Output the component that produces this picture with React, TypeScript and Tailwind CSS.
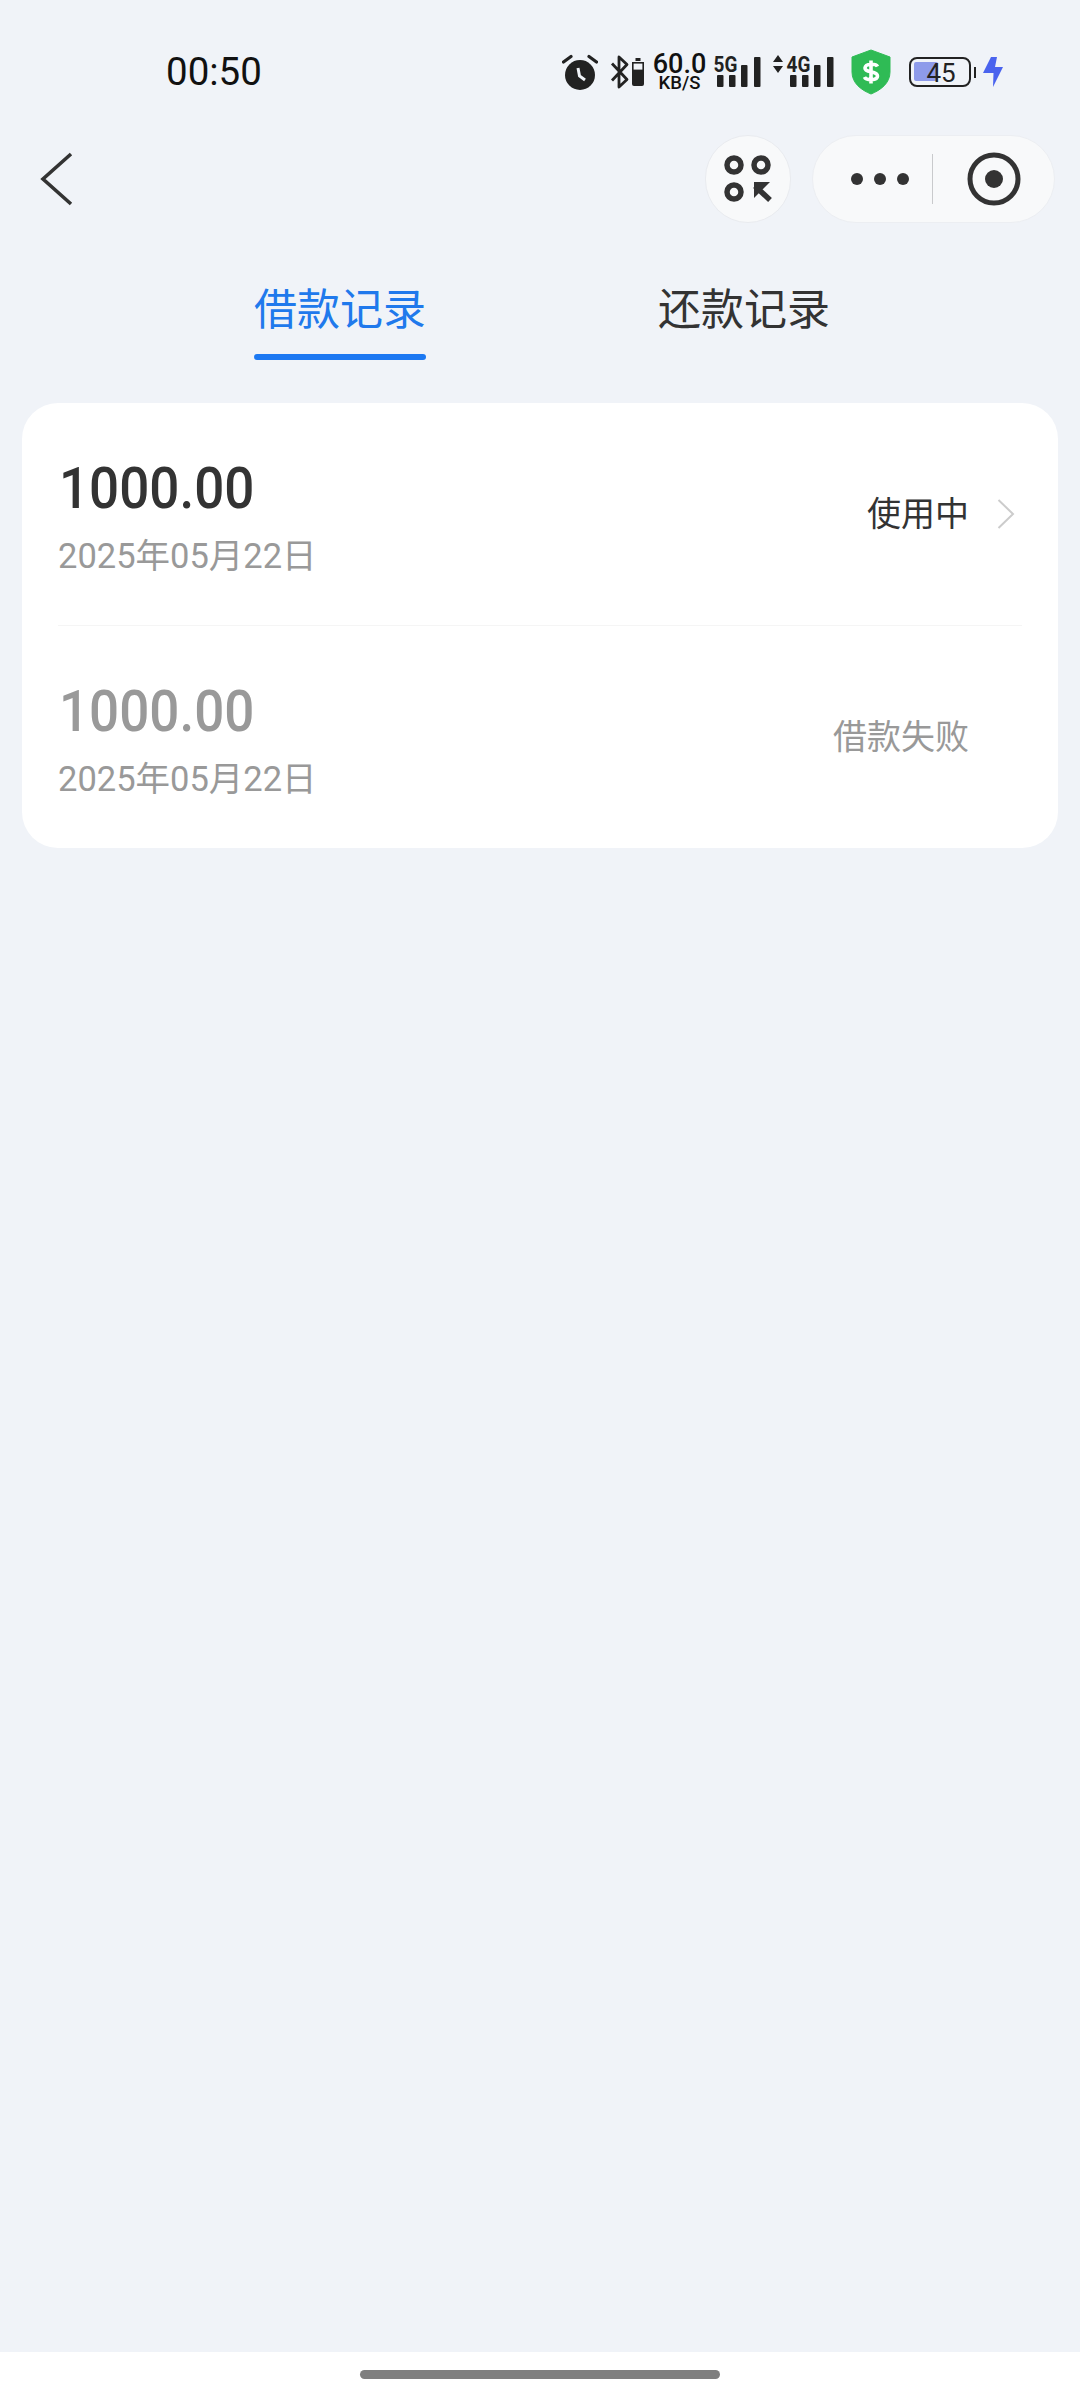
import React from "react";

const font = { fontFamily: '"Roboto","Noto Sans CJK SC",sans-serif' };

function Bars() {
  return (
    <svg width="44" height="30" viewBox="0 0 44 30" className="block" fill="#222">
      <rect x="0" y="18" width="6.5" height="12" rx="1" />
      <rect x="12" y="18" width="6.5" height="12" rx="1" />
      <rect x="24" y="8" width="6.5" height="22" rx="1" />
      <rect x="37" y="0" width="6.5" height="30" rx="1" />
    </svg>
  );
}

function StatusIcons() {
  return (
    <div className="flex items-start">
      <svg width="36" height="38" viewBox="0 0 36 38" className="mt-[53px] block">
        <circle cx="18" cy="22" r="15" fill="#222" />
        <path d="M1.5 9 L9 3.5 M34.5 9 L27 3.5" stroke="#222" strokeWidth="3.2" strokeLinecap="round" />
        <path d="M16 15 L17.5 23 L23 27" stroke="#f0f3f8" strokeWidth="3" fill="none" />
      </svg>
      <svg width="20" height="36" viewBox="0 0 20 36" className="ml-[12px] mt-[54px] block" fill="none">
        <path d="M2 9.5 L17 25.5 L9 33 V3 L17 10.5 L2 26.5" stroke="#222" strokeWidth="2.8" strokeLinejoin="round" />
      </svg>
      <svg width="12" height="28" viewBox="0 0 12 28" className="ml-[2px] mt-[58px] block" fill="#222">
        <rect x="3.5" y="0" width="5" height="3" />
        <path d="M0 4 h12 v22 a2 2 0 0 1 -2 2 h-8 a2 2 0 0 1 -2 -2 z" />
        <rect x="1.6" y="5.6" width="8.8" height="6" fill="#f0f3f8" />
      </svg>
      <div className="ml-[10px] mt-[54px] flex w-[52px] flex-col items-center text-[#111]">
        <span className="whitespace-nowrap text-[27px] font-medium leading-[21px]">60.0</span>
        <span className="mt-[1px] whitespace-nowrap text-[18.5px] font-medium leading-[15px]">KB/S</span>
      </div>
      <div className="relative ml-[11px] mt-[57px] h-[30px] w-[44px]">
        <Bars />
        <span className="absolute left-[-3px] top-[-2px] origin-top scale-y-[1.15] bg-[#f0f3f8] pr-[1px] text-[19px] font-bold leading-[17px] text-[#222]">5G</span>
      </div>
      <svg width="10" height="18" viewBox="0 0 10 18" className="ml-[12px] mt-[55px] block" fill="#222">
        <path d="M5 0 L10 7 H0 Z M5 18 L0 11 H10 Z" />
      </svg>
      <div className="relative ml-[7px] mt-[57px] h-[30px] w-[44px]">
        <Bars />
        <span className="absolute left-[-3px] top-[-2px] origin-top scale-y-[1.15] bg-[#f0f3f8] pr-[1px] text-[19px] font-bold leading-[17px] text-[#222]">4G</span>
      </div>
      <svg width="42" height="46" viewBox="0 0 42 46" className="ml-[16px] mt-[49px] block">
        <path d="M21 1 L40 8 V23 C40 34 31 41 21 45 C11 41 2 34 2 23 V8 Z" fill="#2fbb55" stroke="#2fbb55" strokeLinejoin="round" />
        <path d="M27.5 17.5 C26 14.5 15.5 14 15 19 C14.7 24 27.5 21.5 27.5 27 C27.5 32 16 31.5 14.5 28 M21 11.5 V34.5" stroke="#fff" strokeWidth="3.6" fill="none" />
      </svg>
      <div className="relative ml-[17px] mt-[57px] h-[30px] w-[62px] rounded-[8px] border-[2.5px] border-[#222] text-[#222]">
        <div className="absolute left-[3px] top-[3px] h-[19px] w-[24px] rounded-[2px] bg-[#8e9bea]" />
        <span className="absolute inset-0 flex items-center justify-center pl-[3px] pt-[1px] text-[26px] leading-none">45</span>
      </div>
      <div className="ml-[3px] mt-[67px] h-[11px] w-[2.5px] bg-[#222]" />
      <svg width="20" height="30" viewBox="0 0 20 30" className="ml-[7px] mt-[57px] block" fill="#4a63ee">
        <path d="M8 0 H14 L12 10 H20 L10 30 L10.5 16 H0 Z" />
      </svg>
    </div>
  );
}

function Row({ dim, status, chevron }: { dim?: boolean; status: string; chevron?: boolean }) {
  return (
    <div className="flex h-[222px] items-center justify-between">
      <div className="flex flex-col items-start pt-[9px]">
        <span className={`block origin-center scale-y-[1.07] pl-[1px] text-[53px] font-medium leading-[62px] ${dim ? "text-[#999999]" : "text-[#333333]"}`}>1000.00</span>
        <span className="mt-[13px] text-[34.5px] leading-[46px] text-[#999999]">2025年05月22日</span>
      </div>
      <div className="flex items-center">
        <span className={`text-[34px] leading-[46px] ${dim ? "text-[#999999]" : "text-[#333333]"}`}>{status}</span>
        <div className="ml-[28px] w-[25px]">
          {chevron && (
            <svg width="18" height="30" viewBox="0 0 18 30" className="block" fill="none">
              <path d="M1.5 1 L16 15 L1.5 29" stroke="#cccccc" strokeWidth="2" />
            </svg>
          )}
        </div>
      </div>
    </div>
  );
}

export default function App() {
  return (
    <div className="flex h-[2400px] w-[1080px] flex-col overflow-hidden bg-[#f0f3f8]" style={font}>
      <div className="flex h-[135px] items-start justify-between pl-[166px] pr-[77px]">
        <span className="mt-[50px] text-[38.5px] font-normal leading-[44px] text-[#111]">00:50</span>
        <StatusIcons />
      </div>

      <div className="flex h-[88px] items-center pl-[40px] pr-[25px]">
        <svg width="34" height="54" viewBox="0 0 34 54" className="block" fill="none">
          <path d="M32 2 L4 27 L32 52" stroke="#333333" strokeWidth="3.6" transform="translate(-1 0)" />
        </svg>
        <div className="flex-1" />
        <div className="flex h-[88px] w-[86px] items-center justify-center rounded-full border border-[#e9ebef] bg-[#f8f9fa]">
          <svg width="48" height="48" viewBox="0 0 48 48" fill="none" stroke="#333333" strokeWidth="5.5">
            <circle cx="10" cy="10" r="7" />
            <circle cx="37" cy="10" r="7" />
            <circle cx="10" cy="37" r="7" />
            <path d="M31 31 L46 45" />
            <path d="M30 27 H46 L30 43 Z" fill="#333333" stroke="none" />
          </svg>
        </div>
        <div className="ml-[21px] flex h-[88px] w-[243px] items-center rounded-full border border-[#eceef2] bg-[#f8f9fa]">
          <div className="ml-[38px] flex gap-[11px]">
            <div className="h-[12px] w-[12px] rounded-full bg-[#333333]" />
            <div className="h-[12px] w-[12px] rounded-full bg-[#333333]" />
            <div className="h-[12px] w-[12px] rounded-full bg-[#333333]" />
          </div>
          <div className="ml-[23px] h-[50px] w-px bg-[#c9cacc]" />
          <svg width="54" height="54" viewBox="0 0 54 54" className="ml-[34px] block" fill="none">
            <circle cx="27" cy="27" r="24" stroke="#333333" strokeWidth="5" />
            <circle cx="27" cy="27" r="9" fill="#333333" />
          </svg>
        </div>
      </div>

      <div className="mt-[58px] flex h-[91px] pl-[254px]">
        <div className="flex w-[172px] flex-col items-center">
          <span className="whitespace-nowrap text-[43px] leading-[58px] text-[#2079ec]">借款记录</span>
          <div className="mt-[15px] h-[6px] w-[172px] rounded-full bg-[#1c78f2]" />
        </div>
        <span className="ml-[232px] whitespace-nowrap text-[43px] leading-[58px] text-[#333333]">还款记录</span>
      </div>

      <div className="mx-[22px] mt-[31px] rounded-[36px] bg-white px-[36px]">
        <Row status="使用中" chevron />
        <div className="h-px bg-[#f5f5f5]" />
        <Row dim status="借款失败" />
      </div>

      <div className="flex-1" />
      <div className="flex h-[48px] justify-center bg-white pt-[18px]">
        <div className="h-[9px] w-[360px] rounded-full bg-[#7f7f7f]" />
      </div>
    </div>
  );
}
